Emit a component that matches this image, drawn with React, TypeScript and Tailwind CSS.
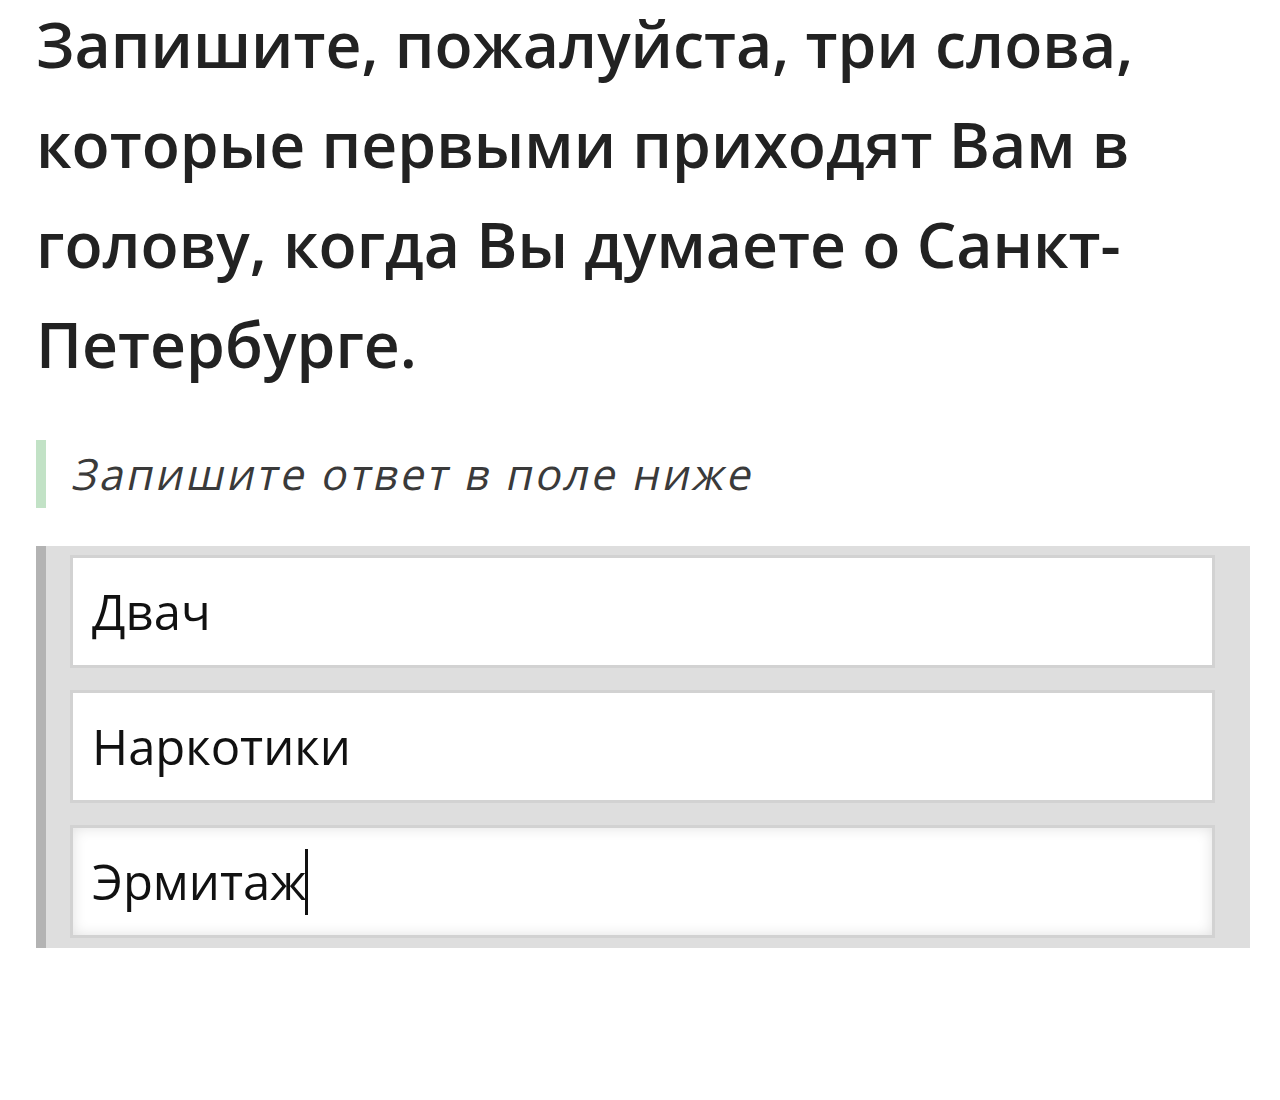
export default function App() {
  return (
    <div className="min-h-[1100px] bg-white font-['Open_Sans',sans-serif] text-[#222]">
      <div className="pl-9 pr-[30px]">
        <h1 className="mt-[-6px] text-[62.5px] font-semibold leading-[100px] text-[#222]">
          Запишите, пожалуйста, три слова, которые первыми приходят Вам в голову, когда Вы думаете о Санкт-Петербурге.
        </h1>
        <div className="mt-[46px] flex h-[68px] items-center border-l-[10px] border-[#c2e2c6] pl-[21px]">
          <span className="inline-block origin-bottom -skew-x-12 text-[43px] tracking-[2.8px] text-[#3a3a3a]">
            Запишите ответ в поле ниже
          </span>
        </div>
        <div className="mt-[38px] flex w-[1214px] flex-col gap-[22px] border-l-[10px] border-[#b3b3b3] bg-[#dedede] pb-[10px] pl-6 pr-[35px] pt-[9px]">
          <div className="flex h-[113px] items-center border-[3px] border-[#d2d2d2] bg-white pl-[19px] text-[49px] text-[#111]">
            Двач
          </div>
          <div className="flex h-[113px] items-center border-[3px] border-[#d2d2d2] bg-white pl-[19px] text-[49px] text-[#111]">
            Наркотики
          </div>
          <div className="flex h-[113px] items-center border-[3px] border-[#d2d2d2] bg-white pl-[19px] text-[49px] text-[#111] shadow-[inset_0_0_14px_rgba(0,0,0,0.12)]">
            <span>Эрмитаж</span>
            <span className="ml-[-1px] h-[66px] w-[3px] bg-[#111]" />
          </div>
        </div>
      </div>
    </div>
  );
}
